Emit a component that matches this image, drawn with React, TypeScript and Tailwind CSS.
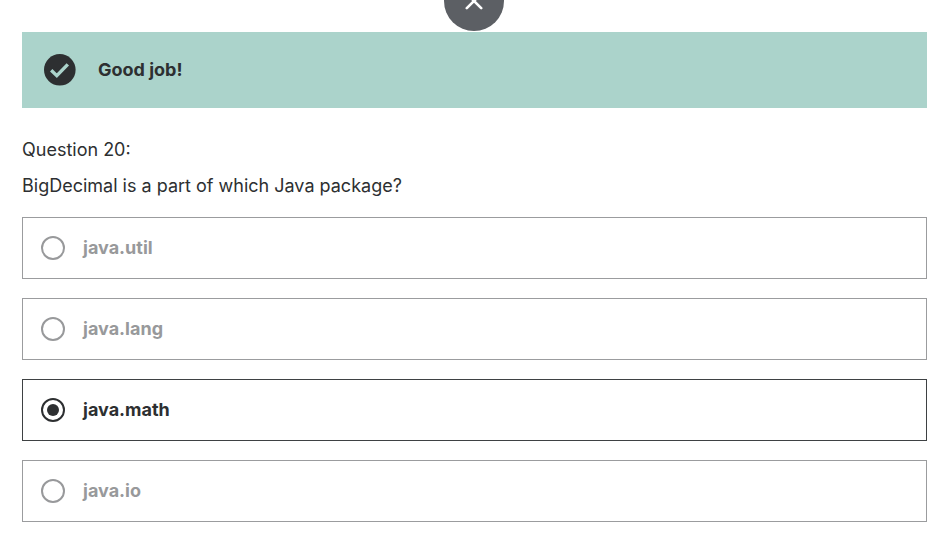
import { useState } from "react";

const answers = ["java.util", "java.lang", "java.math", "java.io"];

function CloseButton() {
  return (
    <button
      type="button"
      aria-label="Close"
      className="absolute left-1/2 -top-[29px] flex size-[60px] -translate-x-1/2 items-center justify-center rounded-full bg-[#5c5f64]"
    >
      <svg viewBox="0 0 18 18" className="size-[18px]" fill="none" stroke="#fff" strokeWidth="2.6" strokeLinecap="round">
        <path d="M1.8 1.8 16.2 16.2M16.2 1.8 1.8 16.2" />
      </svg>
    </button>
  );
}

function Banner() {
  return (
    <div role="status" className="flex h-[76px] items-center gap-[22px] bg-[#abd3cb] px-[22px]">
      <svg viewBox="0 0 32 32" className="size-8 shrink-0" aria-hidden="true">
        <circle cx="15.8" cy="15.8" r="15.8" fill="#2d2f31" />
        <path d="M7.2 16.2 12.8 21.6 23.8 10.4" fill="none" stroke="#abd3cb" strokeWidth="3.4" />
      </svg>
      <p className="text-lg leading-6 font-bold">Good job!</p>
    </div>
  );
}

export default function App() {
  const [selected, setSelected] = useState("java.math");

  return (
    <div className="relative min-h-screen overflow-hidden bg-white pt-8 pr-5 pl-[22px] font-['Inter','Liberation_Sans',sans-serif] text-[#2d2f31]">
      <Banner />
      <CloseButton />
      <fieldset className="mt-[30px]">
        <legend className="text-lg leading-6">
          <span className="block">Question 20:</span>
          <span className="mt-3 block">BigDecimal is a part of which Java package?</span>
        </legend>
        <div className="flex flex-col gap-[19px] pt-[19px]">
          {answers.map((answer) => (
            <label
              key={answer}
              className="flex h-[62px] cursor-pointer items-center gap-[18px] border border-[#9b9c9e] px-[18px] text-[#98999b] has-checked:border-[#3e4143] has-checked:text-[#2d2f31]"
            >
              <input
                type="radio"
                name="answer"
                value={answer}
                checked={selected === answer}
                onChange={() => setSelected(answer)}
                className="size-6 shrink-0 appearance-none rounded-full border-2 border-current bg-clip-content p-1 checked:bg-current"
              />
              <span className="text-lg leading-6 font-bold">{answer}</span>
            </label>
          ))}
        </div>
      </fieldset>
    </div>
  );
}
